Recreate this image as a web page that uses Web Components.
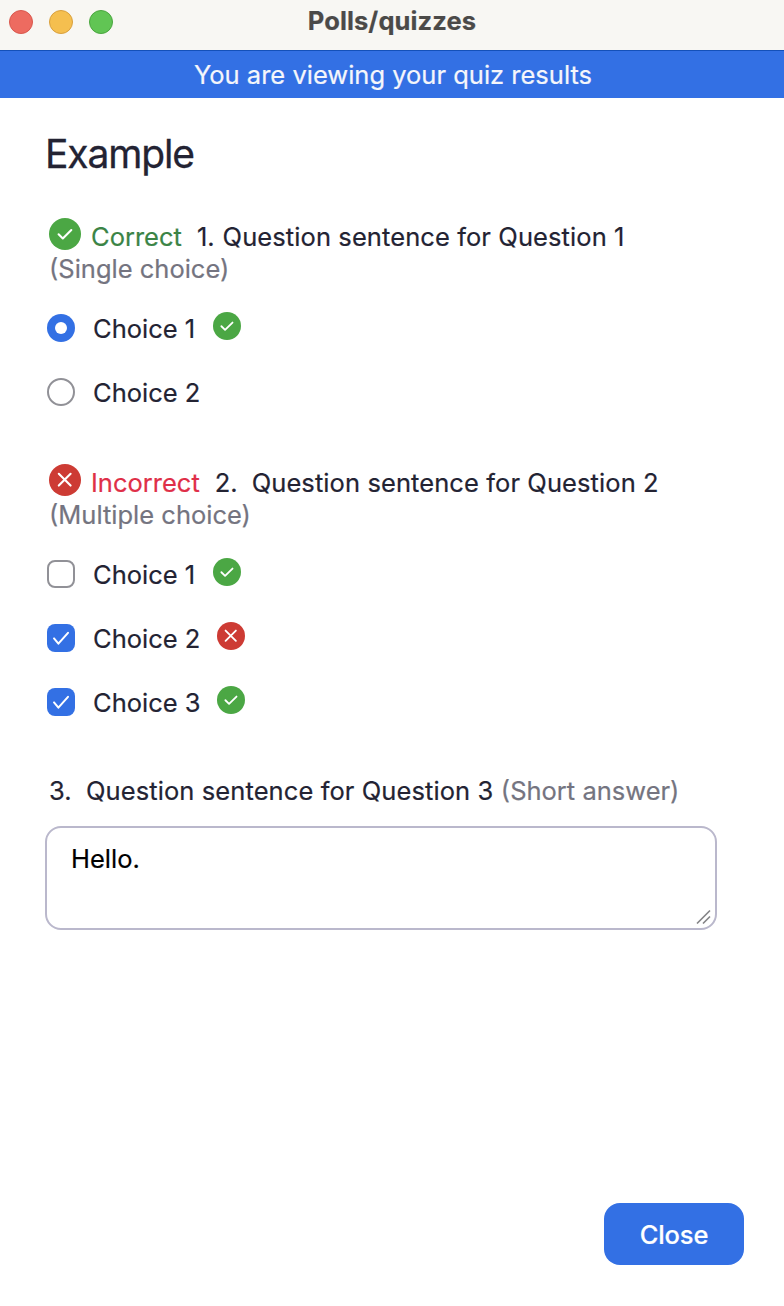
<!DOCTYPE html>
<html lang="en">
<head>
<meta charset="utf-8">
<title>Polls/quizzes</title>
<style>
html,body{margin:0;height:100%;background:#fff}
body{font:400 25.5px/32px Inter,"Liberation Sans",sans-serif;color:#232333;-webkit-text-stroke:.2px}
</style>
</head>
<body>
<quiz-window heading="Polls/quizzes" notice="You are viewing your quiz results">
  <quiz-title>Example</quiz-title>
  <quiz-question result="correct" label="Correct" number="1." kind="(Single choice)" style="--gap:8px">
    Question sentence for Question 1
    <quiz-choice slot="answers" type="radio" checked mark="correct" style="--mark-gap:18px">Choice 1</quiz-choice>
    <quiz-choice slot="answers" type="radio">Choice 2</quiz-choice>
  </quiz-question>
  <quiz-question result="incorrect" label="Incorrect" number="2." kind="(Multiple choice)" style="--gap:14px">
    Question sentence for Question 2
    <quiz-choice slot="answers" type="checkbox" mark="correct" style="--mark-gap:18px">Choice 1</quiz-choice>
    <quiz-choice slot="answers" type="checkbox" checked mark="incorrect" style="--mark-gap:17px">Choice 2</quiz-choice>
    <quiz-choice slot="answers" type="checkbox" checked mark="correct" style="--mark-gap:16px">Choice 3</quiz-choice>
  </quiz-question>
  <quiz-question inline number="3." kind="(Short answer)" style="--gap:14.5px">
    Question sentence for Question 3
    <quiz-answer slot="answers">Hello.</quiz-answer>
  </quiz-question>
  <quiz-button slot="footer">Close</quiz-button>
</quiz-window>
<script>
class Base extends HTMLElement {
  constructor() { super(); this.attachShadow({mode: 'open'}); }
  connectedCallback() { this.shadowRoot.innerHTML = this.view(); }
  attr(n) { return this.getAttribute(n) || ''; }
}

customElements.define('quiz-window', class extends Base {
  view() { return `<style>
    :host{display:flex;flex-direction:column;height:1306px;box-sizing:border-box;overflow:hidden}
    header{height:50px;flex:none;background:#f8f7f3;display:grid;grid-template-columns:1fr auto 1fr;box-sizing:border-box;padding:5px 0 0 9px}
    .lights{display:flex;gap:16px;padding-top:5px}
    .lights i{width:24px;height:24px;border-radius:50%;box-sizing:border-box;border:1px solid #d9584d;background:#ed6b60}
    .lights i:nth-child(2){background:#f5bf4f;border-color:#d9a03d}
    .lights i:nth-child(3){background:#61c554;border-color:#4ba63f}
    b{font-weight:700;color:#4b4a48;letter-spacing:.12px;margin-right:9px}
    .notice{height:48px;flex:none;box-sizing:border-box;padding:8px 0 0 2px;background:#3370e4;border-top:1px solid #1450b9;color:#f5f6fb;text-align:center}
    main{flex:1;padding:34px 67px 0 45px}
    footer{display:flex;justify-content:flex-end;padding:0 40px 41px}
    </style><header><div class="lights"><i></i><i></i><i></i></div><b>${this.attr('heading')}</b></header>
    <div class="notice"><span>${this.attr('notice')}</span></div><main><slot></slot></main><footer><slot name="footer"></slot></footer>`; }
});

customElements.define('quiz-title', class extends Base {
  view() { return `<style>:host{display:block;font-size:39px;line-height:44px;height:89px;letter-spacing:-1.15px;-webkit-text-stroke:.3px}</style><slot></slot>`; }
});

customElements.define('quiz-mark', class extends Base {
  view() {
    const ok = this.attr('kind') === 'correct';
    return `<style>:host{display:block;width:28px;height:28px;flex:none}svg{display:block;width:100%;height:100%}</style>
    <svg viewBox="0 0 32 32"><circle cx="16" cy="16" r="16" fill="${ok ? '#4ba744' : '#cd3b34'}"/>
    <path d="${ok ? 'M9.6 16.3l4.2 4.1 8.5-8.3' : 'M9.8 9.8l11.8 11.8M21.6 9.8l-11.8 11.8'}" fill="none" stroke="#fff" stroke-width="2.1" stroke-linecap="round" stroke-linejoin="round"/></svg>`;
  }
});

customElements.define('quiz-question', class extends Base {
  view() {
    const r = this.attr('result'), inl = this.hasAttribute('inline');
    return `<style>
    :host{display:block;margin-bottom:${r === 'correct' ? 58 : 56}px}
    .line{display:flex;height:32px;white-space:nowrap;padding-left:4px}
    quiz-mark{width:32px;height:32px;margin:-3px 10px 0 0}
    .label{color:${r === 'correct' ? '#3b8446' : '#df2f48'};margin-right:15px}
    .text{margin-left:var(--gap);letter-spacing:.09px}
    .kind{color:#747480;${inl ? 'margin-left:7.5px' : 'padding-left:4px;height:32px'}}
    .answers{display:flex;flex-direction:column;gap:32px;margin-top:${inl ? 19 : 28}px;letter-spacing:0}
    </style><div class="line">${r ? `<quiz-mark kind="${r}"></quiz-mark><span class="label">${this.attr('label')}</span>` : ''}<span class="num">${this.attr('number')}</span><span class="text"><slot></slot></span>${inl ? `<span class="kind">${this.attr('kind')}</span>` : ''}</div>
    ${inl ? '' : `<div class="kind">${this.attr('kind')}</div>`}
    <div class="answers"><slot name="answers"></slot></div>`;
  }
});

customElements.define('quiz-choice', class extends Base {
  view() {
    const on = this.hasAttribute('checked'), radio = this.attr('type') === 'radio', m = this.attr('mark');
    return `<style>
    :host{display:flex;height:32px;padding-left:2px}
    .box{width:28px;height:28px;box-sizing:border-box;flex:none;margin:1px 18px 0 0;border-radius:${radio ? '50%' : '8px'};
      ${on ? 'background:#3370e4' : 'border:2px solid #919197;background:#fff'};display:grid;place-items:center}
    .dot{width:12px;height:12px;border-radius:50%;background:#fff}
    quiz-mark{margin:-1px 0 0 var(--mark-gap)}
    </style><span class="box">${on ? (radio ? '<i class="dot"></i>' : '<svg width="28" height="28" viewBox="0 0 28 28"><path d="M7 14.4l4.4 5.3L21 8.8" fill="none" stroke="#fff" stroke-width="2" stroke-linecap="round" stroke-linejoin="round"/></svg>') : ''}</span>
    <span class="text"><slot></slot></span>${m ? `<quiz-mark kind="${m}"></quiz-mark>` : ''}`;
  }
});

customElements.define('quiz-answer', class extends Base {
  view() { return `<style>
    :host{display:flex;justify-content:space-between;box-sizing:border-box;height:104px;border:2px solid #bab8cc;border-radius:16px;padding:15px 3px 3px 24px;color:#000}
    svg{align-self:flex-end}
    </style><span><slot></slot></span><svg width="16" height="16" viewBox="0 0 16 16"><path d="M1 14.5L14 1.5M7 14.5L14 7.5" fill="none" stroke="#858587" stroke-width="1.7"/></svg>`; }
});

customElements.define('quiz-button', class extends Base {
  view() { return `<style>
    :host{display:block}
    button{display:block;width:140px;height:62px;border:0;border-radius:16px;padding:1px 0 0;background:#3370e4;color:#fff;font:500 25.5px/32px Inter,"Liberation Sans",sans-serif;letter-spacing:-.1px}
    </style><button><slot></slot></button>`; }
});
</script>
</body>
</html>
